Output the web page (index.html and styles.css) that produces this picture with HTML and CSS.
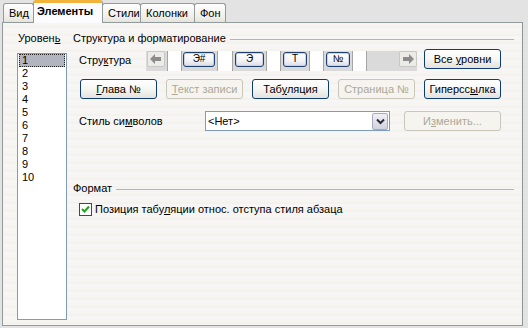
FILE: index.html
```html
<!DOCTYPE html>
<html lang="ru">
<head>
<meta charset="utf-8">
<link rel="stylesheet" href="styles.css">
</head>
<body>
<div class="dialog">
  <div class="tabs">
    <div class="tab t-vid">Вид</div>
    <div class="tab active t-el">Элементы</div>
    <div class="tab t-st">Стили</div>
    <div class="tab t-col">Колонки</div>
    <div class="tab t-bg">Фон</div>
  </div>
  <div class="panel">
    <div class="left">
      <div class="lbl">Уровен<u>ь</u></div>
      <div class="listbox">
        <div class="item sel">1</div>
        <div class="item">2</div>
        <div class="item">3</div>
        <div class="item">4</div>
        <div class="item">5</div>
        <div class="item">6</div>
        <div class="item">7</div>
        <div class="item">8</div>
        <div class="item">9</div>
        <div class="item">10</div>
      </div>
    </div>
    <div class="right">
      <div class="group-head"><span>Структура и форматирование</span><i class="rule"></i></div>
      <div class="row row1">
        <div class="rlabel">Стру<u>к</u>тура</div>
        <div class="strip">
          <div class="arrow-btn">
            <svg width="12" height="10" viewBox="0 0 12 10"><path d="M0 5 L5 0 L5 3 L11 3 L11 7 L5 7 L5 10 Z" fill="#8c8c8c"/></svg>
          </div>
          <div class="cell c1"></div>
          <div class="tok w32">Э#</div>
          <div class="cell c2"></div>
          <div class="tok w29">Э</div>
          <div class="cell c3"></div>
          <div class="tok w24">Т</div>
          <div class="cell c3"></div>
          <div class="tok w24">№</div>
          <div class="cell c4"></div>
          <div class="strip-fill"></div>
          <div class="arrow-btn">
            <svg width="12" height="10" viewBox="0 0 12 10"><path d="M12 5 L7 0 L7 3 L1 3 L1 7 L7 7 L7 10 Z" fill="#8c8c8c"/></svg>
          </div>
        </div>
        <button class="btn b-all">Все <u>у</u>ровни</button>
      </div>
      <div class="row row2">
        <button class="btn"><u>Г</u>лава №</button>
        <button class="btn dis"><u>Т</u>екст записи</button>
        <button class="btn">Таб<u>у</u>ляция</button>
        <button class="btn dis">Страница №</button>
        <button class="btn">Гиперсс<u>ы</u>лка</button>
      </div>
      <div class="row row3">
        <div class="rlabel wide">Стиль си<u>м</u>волов</div>
        <div class="combo">
          <span class="combo-text">&lt;Нет&gt;</span>
          <span class="combo-btn">
            <svg width="9" height="7" viewBox="0 0 9 7"><path d="M1 1.5 L4.5 5 L8 1.5" fill="none" stroke="#2b2b3b" stroke-width="2"/></svg>
          </span>
        </div>
        <button class="btn dis b-edit">И<u>з</u>менить...</button>
      </div>
      <div class="group-head fmt"><span>Формат</span><i class="rule"></i></div>
      <label class="check-row">
        <span class="checkbox">
          <svg width="9" height="9" viewBox="0 0 9 9"><path d="M1 4 L3.5 6.5 L8 1.5" fill="none" stroke="#21a121" stroke-width="2"/></svg>
        </span>
        <span>Позиция табу<u>л</u>яции относ. отступа стиля абзаца</span>
      </label>
    </div>
  </div>
</div>
</body>
</html>
```
FILE: styles.css
```css
* { box-sizing: border-box; }
html, body { margin: 0; padding: 0; }
body {
  width: 528px;
  height: 328px;
  background: #e3e3e3;
  font-family: "Liberation Sans", Arial, sans-serif;
  font-size: 11px;
  color: #000;
  overflow: hidden;
}
u { text-decoration: underline; text-underline-offset: 1px; }

.dialog { padding: 0 5px 0 2px; }

.tabs {
  display: flex;
  height: 22px;
  align-items: flex-end;
  padding-left: 1px;
  position: relative;
  z-index: 2;
}
.tab {
  height: 19px;
  border: 1px solid #919b9c;
  border-bottom: none;
  border-radius: 3px 3px 0 0;
  background: linear-gradient(#fefefe, #f0efea 70%, #e5e3da);
  padding: 3px 0 0 5px;
  margin-right: -1px;
  line-height: 13px;
  white-space: nowrap;
}
.t-vid { width: 31px; }
.t-el { width: 70px; }
.t-st { width: 39px; }
.t-col { width: 55px; }
.t-bg { width: 32px; }
.tab.active {
  height: 23px;
  margin-bottom: -1px;
  background: #fcfcfe;
  border-top: 3px solid #f2b33d;
  font-weight: bold;
  padding-top: 2px;
  padding-left: 3px;
  position: relative;
  z-index: 3;
}

.panel {
  height: 304px;
  border: 1px solid #919b9c;
  border-right-color: #8c9595;
  background: repeating-linear-gradient(#f6f5f2 0 3px, #f3f2ee 3px 5px, #f7f6f4 5px 8px);
  display: flex;
  padding: 9px 8px 0 14px;
  gap: 6px;
}

.left { width: 50px; display: flex; flex-direction: column; }
.lbl { line-height: 13px; padding-left: 1px; }
.listbox {
  margin-top: 8px;
  height: 267px;
  background: #fff;
  border: 1px solid #7f9db9;
  padding: 0 1px;
}
.item { height: 13px; line-height: 13px; padding-left: 3px; color: #000; }
.item.sel {
  background: #b2b4bf;
  outline: 1px dotted #222;
  outline-offset: -1px;
}

.right { flex: 1; display: flex; flex-direction: column; }
.group-head {
  display: flex;
  align-items: center;
  line-height: 13px;
  gap: 4px;
}
.rule { flex: 1; height: 1px; background: #b5b5a9; margin-top: 1px; }

.row { display: flex; align-items: center; }
.row1 { margin-top: 4px; height: 22px; align-items: flex-start; }
.row2 { margin-top: 8px; padding-left: 7px; gap: 9px; }
.row3 { margin-top: 12px; }

.rlabel { width: 73px; padding-left: 6px; line-height: 13px; }
.row1 .rlabel { margin-top: 5px; }
.rlabel.wide { width: 132px; }

.strip {
  width: 271px;
  height: 20px;
  margin-top: 2px;
  background: #dadada;
  display: flex;
  align-items: flex-start;
  padding-left: 1px;
}
.arrow-btn {
  width: 18px;
  height: 16px;
  border: 1px solid #c8c8c8;
  border-radius: 2px;
  background: #ecebe6;
  display: flex;
  align-items: center;
  justify-content: center;
}
.cell {
  height: 20px;
  background: #fff;
  border-left: 1px solid #a5a5a5;
  border-right: 1px solid #a5a5a5;
}
.c1 { width: 15px; margin-left: 2px; margin-right: 1px; }
.c2 { width: 16px; margin: 0 2px; }
.c3 { width: 15px; margin: 0 2px; }
.c4 { width: 15px; margin-left: 2px; }
.strip-fill { flex: 1; }
.tok {
  height: 15px;
  margin-top: 1px;
  border: 1px solid #204070;
  border-radius: 3px;
  background: linear-gradient(#ffffff, #f3f3f6 60%, #d9dbe6);
  font-size: 10px;
  line-height: 12px;
  text-align: center;
  color: #000;
  box-shadow: inset 0 0 0 1px #c8d2e8;
}
.w32 { width: 32px; }
.w29 { width: 29px; }
.w24 { width: 24px; }

.btn {
  font: inherit;
  width: 77px;
  height: 20px;
  padding: 0;
  border: 1px solid #0f3b73;
  border-radius: 3px;
  background: linear-gradient(#ffffff, #f6f6f3 50%, #e3e2dc);
  color: #000;
  line-height: 16px;
  text-align: center;
  white-space: nowrap;
}
.btn.dis {
  border-color: #c9c7ba;
  color: #aca899;
  background: #f5f4ef;
}
.b-all { margin-left: 7px; }
.b-edit { width: 97px; margin-left: 14px; }

.combo {
  width: 185px;
  height: 20px;
  border: 1px solid #7f9db9;
  background: #fff;
  display: flex;
  align-items: center;
  padding: 0 1px 0 2px;
}
.combo-text { flex: 1; }
.combo-btn {
  width: 16px;
  height: 17px;
  border: 1px solid #a5acbd;
  border-radius: 2px;
  background: linear-gradient(#f0f0f4, #d2d3de);
  display: flex;
  align-items: center;
  justify-content: center;
}

.fmt { margin-top: 51px; }
.check-row {
  display: flex;
  align-items: center;
  margin-top: 8px;
  padding-left: 6px;
  gap: 3px;
  line-height: 13px;
}
.checkbox {
  width: 13px;
  height: 13px;
  border: 1px solid #1c5180;
  background: #fff;
  display: flex;
  align-items: center;
  justify-content: center;
}
```
